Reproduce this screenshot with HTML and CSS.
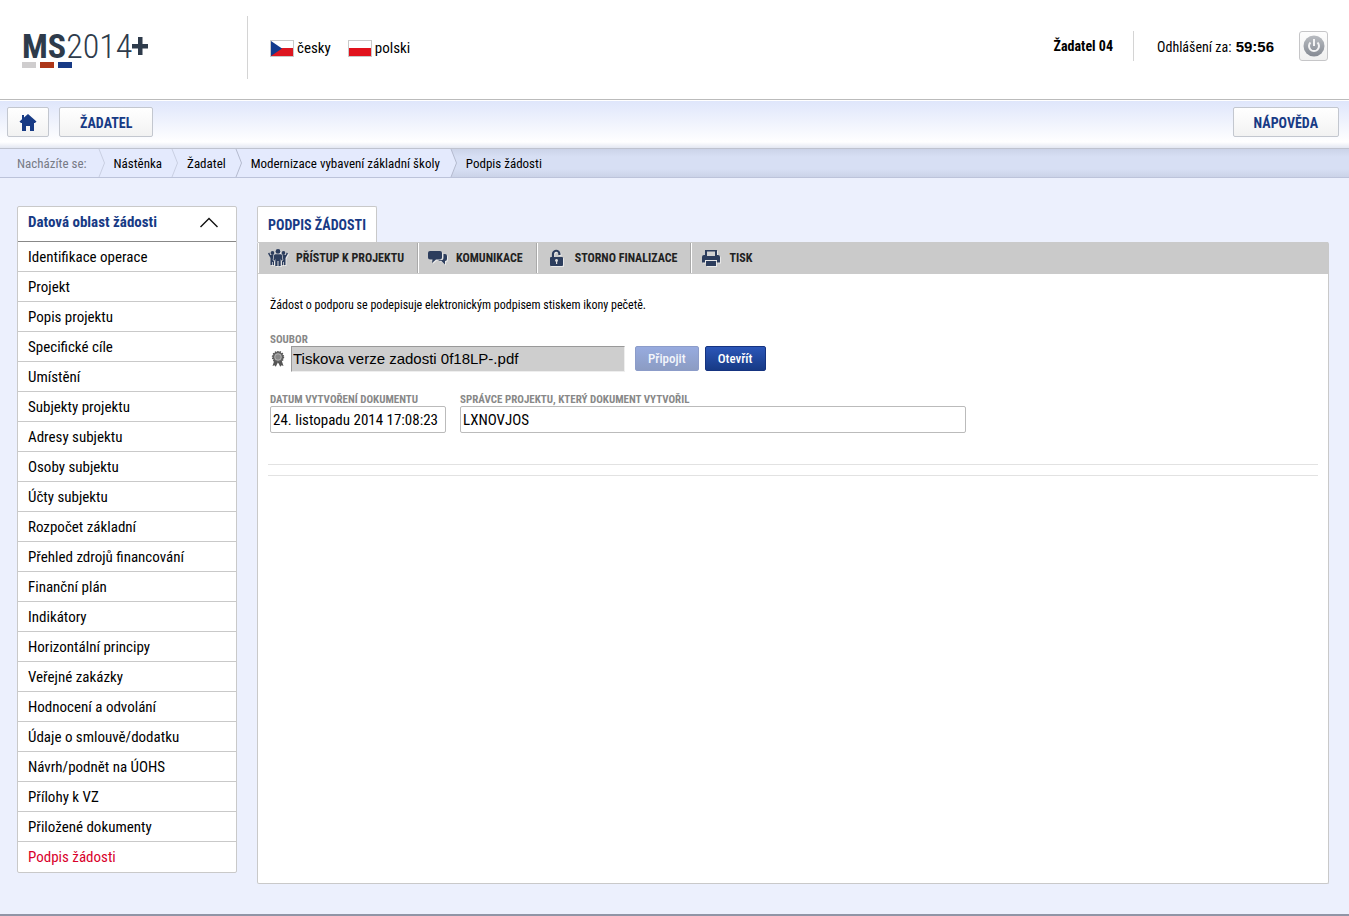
FILE: index.html
```html
<!DOCTYPE html>
<html lang="cs">
<head>
<meta charset="utf-8">
<title>MS2014+ – Podpis žádosti</title>
<link rel="stylesheet" href="styles.css">
</head>
<body>
<header class="top">
  <a class="logo" href="#" aria-label="MS2014+">
    <span class="logo-text"><b>MS</b><span class="logo-year">2014</span><svg class="logo-plus" width="16" height="18" viewBox="0 0 16 18" aria-hidden="true"><path d="M6 0h4.500v7H16v4.500h-5.500V18H6v-6.500H0V7h6z" fill="#2e3b4b"/></svg></span>
    <span class="logo-bars"><i class="bar bar-gray"></i><i class="bar bar-red"></i><i class="bar bar-blue"></i></span>
  </a>
  <nav class="langs">
    <a href="#"><svg width="24" height="17" viewBox="0 0 24 17" aria-hidden="true"><rect width="24" height="17" fill="#c9c9c9"/><rect x="1" y="1" width="22" height="7" fill="#fff"/><rect x="1" y="8" width="22" height="8" fill="#dd1620"/><path d="M1 1l11 7.500L1 16z" fill="#123a8d"/></svg>česky</a>
    <a href="#"><svg width="24" height="17" viewBox="0 0 24 17" aria-hidden="true"><rect width="24" height="17" fill="#c9c9c9"/><rect x="1" y="1" width="22" height="8" fill="#fff"/><rect x="1" y="8" width="22" height="8" fill="#e1121c"/></svg>polski</a>
  </nav>
  <div class="user">
    <strong class="user-name">Žadatel 04</strong>
    <span class="timer">Odhlášení za: <b>59:56</b></span>
    <button class="power" type="button" aria-label="Odhlásit"><svg width="22" height="22" viewBox="0 0 22 22" aria-hidden="true"><defs><linearGradient id="pg" x1="0" y1="0" x2="0" y2="1"><stop offset="0" stop-color="#b9bcc1"/><stop offset="1" stop-color="#858a93"/></linearGradient></defs><circle cx="11" cy="11" r="10.500" fill="url(#pg)"/><path d="M7.500 7.500a5 5 0 1 0 7 0M11 4v7" fill="none" stroke="#f4f4f5" stroke-width="2"/></svg></button>
  </div>
</header>
<nav class="mainnav">
  <a class="navbtn home" href="#" aria-label="Domů"><svg width="18" height="17" viewBox="0 0 18 17" aria-hidden="true"><path d="M9 0l8.500 7.500L16 9h-1v8h-4v-5H7v5H3V9H2L.5 7.500 3 5.300V1h2v2.500z" fill="#173a85"/></svg></a>
  <a class="navbtn" href="#">ŽADATEL</a>
  <a class="navbtn help" href="#">NÁPOVĚDA</a>
</nav>
<nav class="crumbs" aria-label="Drobečková navigace">
  <span class="crumb crumb-label">Nacházíte se:</span>
  <svg class="sep" width="8" height="28" viewBox="0 0 8 28" aria-hidden="true"><path d="M1 0l5.500 14L1 28" fill="none" stroke="#c9cfe2"/></svg>
  <a class="crumb" href="#">Nástěnka</a>
  <svg class="sep" width="8" height="28" viewBox="0 0 8 28" aria-hidden="true"><path d="M1 0l5.500 14L1 28" fill="none" stroke="#c9cfe2"/></svg>
  <a class="crumb" href="#">Žadatel</a>
  <svg class="sep" width="8" height="28" viewBox="0 0 8 28" aria-hidden="true"><path d="M1 0l5.500 14L1 28" fill="none" stroke="#b4bace"/></svg>
  <a class="crumb crumb-long" href="#">Modernizace vybavení základní školy</a>
  <div class="crumb-rest"><svg class="sep" width="8" height="28" viewBox="0 0 8 28" aria-hidden="true"><path d="M0 0h1l5.500 14L1 28H0z" fill="#e4eafd"/><path d="M1 0l5.500 14L1 28" fill="none" stroke="#b4bace"/></svg><span class="crumb">Podpis žádosti</span></div>
</nav>
<main class="page">
  <aside class="side">
    <button class="side-head" type="button">Datová oblast žádosti<svg width="20" height="11" viewBox="0 0 20 11" aria-hidden="true"><path d="M1.500 10L10 1.500l8.500 8.500" fill="none" stroke="#111" stroke-width="1.400"/></svg></button>
    <ul class="menu">
      <li><a href="#">Identifikace operace</a></li>
      <li><a href="#">Projekt</a></li>
      <li><a href="#">Popis projektu</a></li>
      <li><a href="#">Specifické cíle</a></li>
      <li><a href="#">Umístění</a></li>
      <li><a href="#">Subjekty projektu</a></li>
      <li><a href="#">Adresy subjektu</a></li>
      <li><a href="#">Osoby subjektu</a></li>
      <li><a href="#">Účty subjektu</a></li>
      <li><a href="#">Rozpočet základní</a></li>
      <li><a href="#">Přehled zdrojů financování</a></li>
      <li><a href="#">Finanční plán</a></li>
      <li><a href="#">Indikátory</a></li>
      <li><a href="#">Horizontální principy</a></li>
      <li><a href="#">Veřejné zakázky</a></li>
      <li><a href="#">Hodnocení a odvolání</a></li>
      <li><a href="#">Údaje o smlouvě/dodatku</a></li>
      <li><a href="#">Návrh/podnět na ÚOHS</a></li>
      <li><a href="#">Přílohy k VZ</a></li>
      <li><a href="#">Přiložené dokumenty</a></li>
      <li><a class="active" href="#">Podpis žádosti</a></li>
    </ul>
  </aside>
  <section class="content">
    <h1 class="tab">PODPIS ŽÁDOSTI</h1>
    <div class="panel">
      <div class="toolbar">
        <button class="tool" type="button"><svg class="glyph" width="20" height="18" viewBox="0 0 20 18" aria-hidden="true"><g fill="#2c3d5d"><circle cx="10" cy="2.400" r="2.400"/><circle cx="4.500" cy="4" r="1.900"/><circle cx="15.500" cy="4" r="1.900"/><path d="M7.500 5.300h5q1.300 0 1.500 1.200l.6 4.500-1.400.4-.5-2V17h-2.200v-5h-1v5H7.300V9.400l-.5 2-1.400-.4L6 6.500q.2-1.200 1.500-1.200z"/><path d="M1.200 3.500L2.500 6h3L4.700 11l1.300 1V16H4.700v-3h-.7v3H2.500V9L0 4.500zM18.800 3.500L17.500 6h-3l.8 5-1.300 1V16h1.300v-3h.7v3h1.500V9L20 4.500z"/></g></svg>PŘÍSTUP K PROJEKTU</button>
        <button class="tool" type="button"><svg class="glyph" width="20" height="18" viewBox="0 0 20 18" aria-hidden="true"><g fill="#2c3d5d"><path d="M2 2h10q2 0 2 2v4.500q0 2-2 2H8L4 14l.5-3.500H2q-2 0-2-2V4q0-2 2-2z"/><path d="M15.500 5H17q2 0 2 2v3q0 2-2 2v3.500L13.500 12H10l1.500-.7H13q2.500 0 2.500-2.500z"/></g></svg>KOMUNIKACE</button>
        <button class="tool" type="button"><svg class="glyph" width="20" height="18" viewBox="0 0 20 18" aria-hidden="true"><path d="M6 9V5.200a3.200 3.200 0 0 1 6.400-.5V6" fill="none" stroke="#2c3d5d" stroke-width="2.200"/><rect x="3" y="8" width="13" height="9" rx="1" fill="#2c3d5d"/><circle cx="9.500" cy="11.500" r="1.400" fill="#ddd"/><path d="M9 11.500h1.200V15H9z" fill="#ddd"/></svg>STORNO FINALIZACE</button>
        <button class="tool tool-last" type="button"><svg class="glyph" width="20" height="18" viewBox="0 0 20 18" aria-hidden="true"><path d="M4 1h12v5h1q2 0 2 2v5.500h-3V11H4v2.500H1V8q0-2 2-2h1z" fill="#2c3d5d"/><rect x="6" y="2.500" width="8" height="4.500" fill="#d2d2d2"/><rect x="5" y="12" width="10" height="5" fill="#2c3d5d"/></svg>TISK</button>
      </div>
      <form class="form">
        <p class="note">Žádost o podporu se podepisuje elektronickým podpisem stiskem ikony pečetě.</p>
        <div class="field field-file">
          <label for="file">SOUBOR</label>
          <div class="file-row">
            <svg width="14" height="16" viewBox="0 0 14 16" aria-hidden="true"><path d="M3.500 9L1.500 15l2-.7 1.300 1.500L7 11l2.200 4.800 1.300-1.500 2 .7L10.500 9z" fill="#555"/><circle cx="7" cy="6" r="5.400" fill="#666" stroke="#555" stroke-width="1.600" stroke-dasharray="1.400 1"/><circle cx="7" cy="6" r="3.300" fill="#888" stroke="#ccc" stroke-width=".7"/></svg>
            <input id="file" class="file" type="text" value="Tiskova verze zadosti 0f18LP-.pdf" readonly>
            <button class="btn btn-off" type="button" disabled>Připojit</button>
            <button class="btn btn-open" type="button">Otevřít</button>
          </div>
        </div>
        <div class="row">
          <div class="field field-date"><label for="date">DATUM VYTVOŘENÍ DOKUMENTU</label><input id="date" type="text" value="24. listopadu 2014 17:08:23"></div>
          <div class="field field-owner"><label for="owner">SPRÁVCE PROJEKTU, KTERÝ DOKUMENT VYTVOŘIL</label><input id="owner" type="text" value="LXNOVJOS"></div>
        </div>
        <div class="rules"></div>
      </form>
    </div>
  </section>
</main>
</body>
</html>
```
FILE: styles.css
```css
* { box-sizing: border-box; }
body {
  margin: 0;
  min-height: 100vh;
  display: flex;
  flex-direction: column;
  background: #ecf0fd;
  border-bottom: 2px solid #9095a6;
  color: #000;
  font-family: "Roboto Condensed", "Liberation Sans Narrow", "Liberation Sans", sans-serif;
  font-size: 15px;
}
a { color: inherit; text-decoration: none; }
button, input { font: inherit; color: inherit; margin: 0; }
svg { flex: none; display: block; }

.top {
  display: flex;
  align-items: flex-start;
  height: 100px;
  padding: 16px 21px 0 22px;
  background: #fff;
  border-bottom: 1px solid #bbb;
}
.logo {
  width: 226px;
  height: 63px;
  padding-top: 12px;
  border-right: 1px solid #d4d4d4;
  color: #2e3b4b;
}
.logo-text { display: flex; font-size: 34px; line-height: 36px; }
.logo-year { font-weight: 300; }
.logo-plus { margin-top: 9px; }
.logo-bars { display: flex; gap: 4px; margin-top: -2px; }
.bar { width: 14px; height: 6px; }
.bar-gray { background: #cfcdce; }
.bar-red { background: #ad3619; }
.bar-blue { background: #173a85; }
.langs { display: flex; gap: 17px; margin: 22px 0 0 22px; line-height: 20px; }
.langs a { display: flex; gap: 3px; align-items: center; }
.user { display: flex; align-items: center; margin: 15px 0 0 auto; height: 30px; font-size: 14px; }
.user-name { padding-right: 20px; border-right: 1px solid #d4d4d4; line-height: 30px; }
.timer { padding: 0 25px 0 23px; }
.timer b { margin-left: 1px; font-family: "Liberation Sans", Arial, sans-serif; font-size: 15px; }
.power {
  display: flex;
  align-items: center;
  justify-content: center;
  width: 29px;
  height: 30px;
  padding: 0;
  border: 1px solid #c6c6c8;
  border-radius: 3px;
  background: linear-gradient(#fdfdfd, #f0f0f0);
}

.mainnav {
  display: flex;
  gap: 10px;
  height: 49px;
  padding: 7px 10px 0 7px;
  background: linear-gradient(#fff 1px, #dfe6fb 1px, #fff 42px, #e3e7f2);
  border-bottom: 1px solid #bfc3cf;
}
.navbtn {
  display: flex;
  align-items: center;
  height: 30px;
  padding: 1px 20px 0;
  border: 1px solid #c3c7cf;
  border-radius: 2px;
  background: linear-gradient(#fff, #f2f2f2);
  color: #173a85;
  font-size: 14px;
  font-weight: 700;
}
.home { padding: 0 11px; }
.help { margin-left: auto; }

.crumbs {
  display: flex;
  height: 29px;
  border-bottom: 1px solid #bcc3da;
  background: #e4eafd;
  font-size: 13px;
  line-height: 29px;
}
.crumb { padding: 0 9px 0 8px; }
.crumb-label { padding: 0 11px 0 17px; color: #777b85; }
.crumb-long { padding-right: 10px; }
.crumb-rest {
  flex: 1;
  display: flex;
  background: linear-gradient(#cbd3e8, #d7dff4 8px, #d7dff4 20px, #cbd3e8);
}

.page { flex: 1; display: flex; align-items: flex-start; gap: 20px; padding: 28px 20px 30px 17px; }
.side { width: 220px; background: #fff; border: 1px solid #c9c9c9; border-radius: 2px; }
.side-head {
  display: flex;
  align-items: center;
  justify-content: space-between;
  width: 100%;
  height: 35px;
  padding: 0 17px 4px 10px;
  border: 0;
  border-bottom: 1px solid #888;
  background: none;
  color: #173a85;
  font-weight: 700;
}
.menu { margin: 0; padding: 0; list-style: none; }
.menu a { display: block; height: 30px; padding-left: 10px; line-height: 30px; border-bottom: 1px solid #c9c9c9; }
.menu li:last-child a { border-bottom: 0; }
.menu .active { color: #d9002b; }

.content { flex: 1; align-self: stretch; display: flex; flex-direction: column; align-items: flex-start; }
.tab {
  margin: 0;
  padding: 1px 10px 0;
  border: 1px solid #c9c9c9;
  border-bottom: 0;
  border-radius: 2px 2px 0 0;
  background: #fff;
  color: #173a85;
  font-size: 14px;
  line-height: 34px;
}
.panel { flex: 1; width: 100%; background: #fff; border: 1px solid #c9c9c9; border-top: 0; border-radius: 2px; }
.toolbar { display: flex; height: 32px; padding: 1px 0; background: #cacaca; }
.tool {
  display: flex;
  align-items: center;
  gap: 8px;
  padding: 0 13px 0 9px;
  border: 0;
  border-left: 1px solid #fff;
  border-right: 1px solid #aaa;
  background: none;
  color: #222;
  font-size: 12px;
  font-weight: 700;
}
.tool-last { border-right: 0; }
.glyph { filter: drop-shadow(1px 1px 0 #e8e8e8); }
.form { padding: 22px 10px; }
.note { margin: 0 0 20px 2px; font-size: 12px; line-height: 18px; }
.field label { display: block; color: #888; font-size: 11px; font-weight: 700; line-height: 12px; }
.field input {
  display: block;
  width: 100%;
  height: 27px;
  padding: 0 2px;
  border: 1px solid #bbb;
  border-radius: 2px;
  background: #fff;
}
.field-file { margin: 0 0 22px 2px; }
.file-row { display: flex; align-items: flex-start; }
.file-row svg { margin: 5px 6px 0 1px; }
.field .file {
  width: 334px;
  height: 26px;
  margin-right: 10px;
  padding: 0 1px 1px;
  border-color: #999 #eee #eee #999;
  border-radius: 0;
  background: #cecece;
  font-family: "Liberation Sans", Arial, sans-serif;
}
.btn {
  height: 25px;
  margin-right: 6px;
  border-radius: 2px;
  font-size: 13px;
  font-weight: 500;
  padding: 0 12px;
  color: #fff;
}
.btn-off { border: 1px solid #8c9cc9; background: linear-gradient(#97abdf, #8c9cc3); color: #f3f5fb; }
.btn-open { border: 1px solid #153380; background: linear-gradient(#2b56b8, #173a85); }
.row { display: flex; gap: 14px; margin-left: 2px; }
.field-date { width: 176px; }
.field-owner { width: 506px; }
.rules { height: 12px; margin-top: 31px; border: solid #e2e2e2; border-width: 1px 0; }
```
